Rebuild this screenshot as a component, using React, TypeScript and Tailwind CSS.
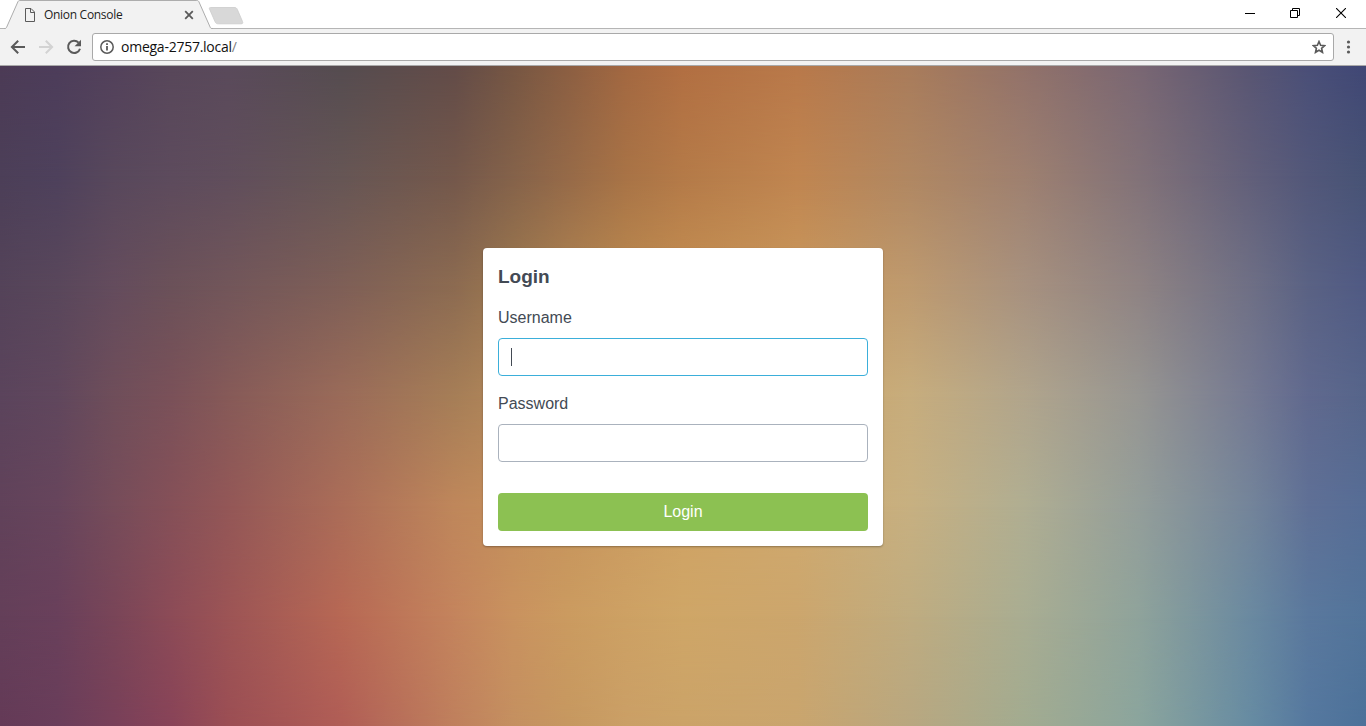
import React from "react";

// Horizontal sample positions and the wallpaper colours at each, top row first.
const COLUMNS = [0, 57, 114, 171, 228, 341, 455, 512, 569, 626, 683, 797, 910, 1024, 1138, 1252, 1309, 1366];
const WALLPAPER: string[][] = [
  ["#4c3b56", "#4d3d5a", "#53415b", "#58475a", "#5a4a5b", "#554c50", "#634c48", "#765643", "#8c5f42", "#a36841", "#b26f42", "#b9794a", "#a97c5b", "#92726a", "#7a6773", "#585573", "#4a4f78", "#404775"],
  ["#4c3f58", "#4e415c", "#58485c", "#5d4b5d", "#604e5c", "#665655", "#74584b", "#84624a", "#966a48", "#a87346", "#b47a48", "#c08550", "#b08762", "#9e8070", "#827278", "#615f7a", "#525779", "#475375"],
  ["#544359", "#59475b", "#644c5d", "#6b5159", "#72565a", "#7e5f57", "#8c6b51", "#9c784f", "#ae8351", "#bb8a50", "#c48f52", "#c9985c", "#be9a6f", "#a7917f", "#8f8383", "#6e6f85", "#5a6284", "#505a84"],
  ["#5b445c", "#60475d", "#6f4e5a", "#7a5159", "#865a58", "#9a6b59", "#a67e57", "#b2885a", "#bd8f56", "#c4965a", "#cc9c60", "#cca468", "#c7ad7d", "#b1a58c", "#979692", "#747992", "#60698e", "#56658a"],
  ["#61425a", "#67455c", "#764c5a", "#855058", "#935757", "#ab6d58", "#bf875b", "#c38e5b", "#c6945c", "#cb9b60", "#cfa264", "#cfa96e", "#c7b081", "#b0ae92", "#949e9a", "#73849a", "#5f7096", "#566d96"],
  ["#643f59", "#69405b", "#794558", "#8c4b57", "#9c5455", "#b76854", "#c4845d", "#c9925f", "#cb9b60", "#cda164", "#cfa667", "#cca66d", "#bfac80", "#a9ad92", "#8fa39b", "#6a89a0", "#5a789d", "#52749a"],
  ["#643a57", "#693d5a", "#784059", "#884358", "#9b4e54", "#b05d56", "#bf805d", "#c48f60", "#c69860", "#ca9f66", "#cba368", "#c9a56e", "#b8a780", "#a2ab90", "#8ba59d", "#668ba2", "#55789f", "#4c7199"],
];

const W = 1366;
const H = 660;
const STEP = H / (WALLPAPER.length - 1);

function Wallpaper() {
  return (
    <svg className="absolute inset-0 h-full w-full" viewBox={`0 0 ${W} ${H}`} preserveAspectRatio="none" aria-hidden="true">
      <defs>
        {WALLPAPER.map((row, r) => (
          <linearGradient key={r} id={`row${r}`} x1="0" y1="0" x2="1" y2="0">
            {row.map((c, i) => (
              <stop key={i} offset={COLUMNS[i] / W} stopColor={c} />
            ))}
          </linearGradient>
        ))}
        {WALLPAPER.slice(1).map((_, i) => (
          <React.Fragment key={i}>
            <linearGradient id={`fade${i + 1}`} gradientUnits="userSpaceOnUse" x1="0" x2="0" y1={i * STEP} y2={(i + 1) * STEP}>
              <stop offset="0" stopColor="#fff" stopOpacity="0" />
              <stop offset="1" stopColor="#fff" stopOpacity="1" />
            </linearGradient>
            <mask id={`mask${i + 1}`} maskUnits="userSpaceOnUse" x="0" y="0" width={W} height={H}>
              <rect width={W} height={H} fill={`url(#fade${i + 1})`} />
            </mask>
          </React.Fragment>
        ))}
      </defs>
      <rect width={W} height={H} fill="url(#row0)" />
      {WALLPAPER.slice(1).map((_, i) => (
        <rect key={i} y={i * STEP} width={W} height={H - i * STEP} fill={`url(#row${i + 1})`} mask={`url(#mask${i + 1})`} />
      ))}
    </svg>
  );
}

function TabStrip() {
  return (
    <div className="relative flex h-[29px] items-start bg-white">
      <svg className="absolute inset-0" width="1366" height="29" aria-hidden="true">
        <path d="M0 28.5H1366" stroke="#b5b5b5" />
        <path d="M5 29L6.500 27.500L17.800 2C18.300 .9 18.800 .5 20 .5H196.800C198 .5 198.500 .9 199 2L210.300 27.500L211.800 29Z" fill="#f2f2f2" />
        <path d="M4 28.500C5.500 28.500 6 28.400 6.500 27.500L17.800 2C18.300 .9 18.800 .5 20 .5H196.800C198 .5 198.500 .9 199 2L210.300 27.500C210.800 28.400 211.300 28.500 213 28.500" fill="none" stroke="#adadad" />
        <path d="M210.500 7.500H234C236 7.500 236.700 8 237.400 9.600L242.500 21.500C243.200 23.200 242.700 23.800 241 23.800H218.500C216.500 23.800 215.700 23.300 215 21.600L209.500 9C209.100 8 209.400 7.500 210.500 7.500Z" fill="#d8d8d8" stroke="#cccccc" strokeWidth=".8" />
      </svg>
      <div className="relative flex h-[28px] w-[211px] items-center pl-[24px] pt-[2px]">
        <svg width="12" height="14" viewBox="0 0 12 14" fill="none" stroke="#5a5a5a" aria-hidden="true">
          <path d="M1.500 .5H7L10.500 4V13.500H1.500ZM6.500 .5V4.500H10.500" />
        </svg>
        <span className="ml-[8px] w-[136px] whitespace-nowrap font-['Open_Sans','Noto_Sans',sans-serif] text-[12px] leading-[16px] tracking-[-0.300px] text-[#222]">Onion Console</span>
        <svg className="ml-[4px]" width="10" height="10" viewBox="0 0 10 10" stroke="#5a5a5a" strokeWidth="1.800" aria-hidden="true">
          <path d="M1.200 1.200L8.800 8.800M8.800 1.200L1.200 8.800" />
        </svg>
      </div>
      <div className="relative ml-auto flex h-[26px] items-center pr-[20px] text-black">
        <svg width="11" height="11" viewBox="0 0 11 11" fill="none" stroke="currentColor" aria-hidden="true">
          <path d="M0 5.500H10" />
        </svg>
        <svg className="ml-[34px]" width="11" height="11" viewBox="0 0 11 11" fill="none" stroke="currentColor" aria-hidden="true">
          <path d="M.5 2.500H7.500V9.500H.5ZM2.500 2.500V.5H9.500V7.500H7.500" />
        </svg>
        <svg className="ml-[35px]" width="10" height="10" viewBox="0 0 10 10" stroke="currentColor" strokeWidth="1.100" aria-hidden="true">
          <path d="M0 0L10 10M10 0L0 10" />
        </svg>
      </div>
    </div>
  );
}

function Toolbar() {
  return (
    <div className="flex h-[37px] items-center border-b border-[#a9a9a9] bg-[#f2f2f2]">
      <svg className="ml-[10px]" width="16" height="16" viewBox="0 0 16 16" fill="none" stroke="#5a5a5a" strokeWidth="2" aria-hidden="true">
        <path d="M15 8H2.500M8.200 1.700L1.900 8L8.200 14.300" />
      </svg>
      <svg className="ml-[12px]" width="16" height="16" viewBox="0 0 16 16" fill="none" stroke="#d3d3d3" strokeWidth="2" aria-hidden="true">
        <path d="M1 8H13.500M7.800 1.700L14.100 8L7.800 14.300" />
      </svg>
      <svg className="ml-[12px]" width="16" height="16" viewBox="0 0 16 16" aria-hidden="true">
        <path d="M12.600 3.600A6.100 6.100 0 1 0 14 9.700" fill="none" stroke="#5a5a5a" strokeWidth="2" />
        <path d="M15 .8V7.200H8.600Z" fill="#5a5a5a" />
      </svg>
      <div className="ml-[10px] flex h-[28px] w-[1242px] items-center rounded-[3px] border border-[#a9a9a9] bg-white pl-[7px] pr-[7px]">
        <svg width="14" height="14" viewBox="0 0 14 14" fill="none" aria-hidden="true">
          <circle cx="7" cy="7" r="6.200" stroke="#5a5a5a" strokeWidth="1.500" />
          <path d="M7 6V10.500M7 3.300V5" stroke="#5a5a5a" strokeWidth="1.800" />
        </svg>
        <span className="ml-[7px] whitespace-nowrap font-['Open_Sans','Noto_Sans',sans-serif] text-[14px] leading-[20px] tracking-[-0.250px] text-[#111]">
          omega-2757.local<span className="text-[#808080]">/</span>
        </span>
        <svg className="ml-auto" width="14" height="14" viewBox="0 0 14 14" fill="none" stroke="#5a5a5a" strokeWidth="1.600" aria-hidden="true">
          <path d="M7 1.500L8.600 5.200L12.700 5.600L9.600 8.300L10.500 12.300L7 10.200L3.500 12.300L4.400 8.300L1.300 5.600L5.400 5.200Z" />
        </svg>
      </div>
      <svg className="ml-[12px]" width="5" height="14" viewBox="0 0 5 14" fill="#5a5a5a" aria-hidden="true">
        <circle cx="2.500" cy="2" r="1.600" />
        <circle cx="2.500" cy="7" r="1.600" />
        <circle cx="2.500" cy="12" r="1.600" />
      </svg>
    </div>
  );
}

function LoginCard() {
  return (
    <form className="relative flex h-[298px] w-[400px] flex-col rounded-[4px] bg-white p-[15px] text-[16px] leading-[24px] text-[#434a54] shadow-[0_1px_2px_rgba(0,0,0,0.3)]">
      <h1 className="mt-[2px] text-[19px] font-bold leading-[24px]">Login</h1>
      <label className="mt-[17px]">Username</label>
      <div className="mt-[8px] flex h-[38px] items-center rounded-[4px] border border-[#3bafda] bg-white px-[12px]">
        <span className="h-[18px] w-px bg-[#434a54]" />
      </div>
      <label className="mt-[16px]">Password</label>
      <div className="mt-[8px] h-[38px] rounded-[4px] border border-[#aab2bd] bg-white" />
      <button type="button" className="mt-[31px] h-[38px] rounded-[4px] bg-[#8cc152] text-white">Login</button>
    </form>
  );
}

export default function App() {
  return (
    <div className="flex h-[726px] w-[1366px] flex-col overflow-hidden font-['Liberation_Sans',Arial,sans-serif]">
      <TabStrip />
      <Toolbar />
      <main className="relative flex flex-1 items-start justify-center pt-[182px]">
        <Wallpaper />
        <LoginCard />
      </main>
    </div>
  );
}
